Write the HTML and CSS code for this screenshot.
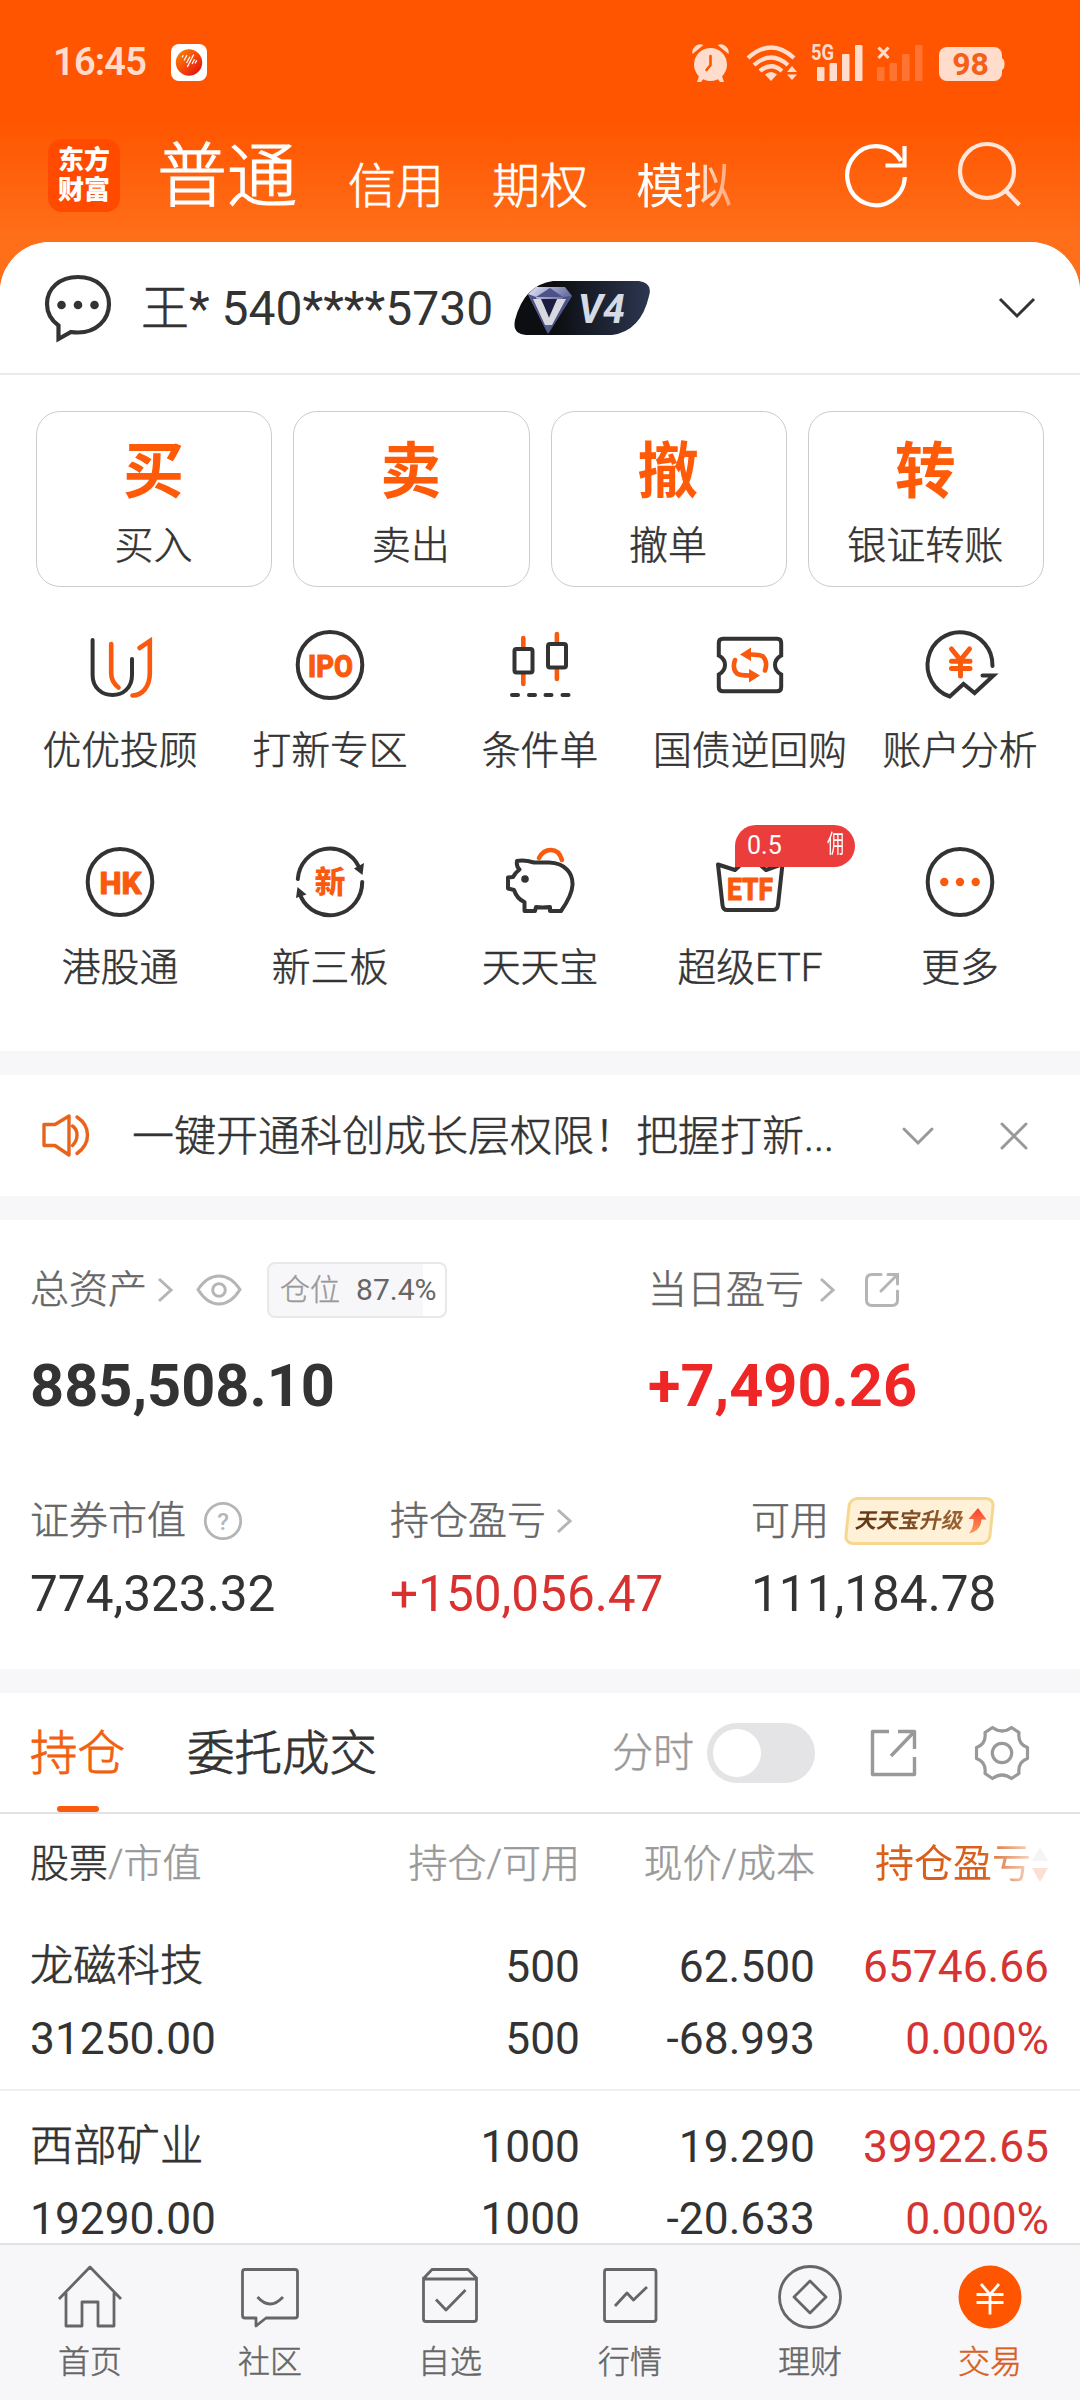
FILE: index.html
```html
<!DOCTYPE html>
<html lang="zh-CN">
<head>
<meta charset="utf-8">
<title>交易</title>
<link rel="stylesheet" href="styles.css">
</head>
<body>
<div class="app">
  <header class="top">
    <div class="status">
      <span class="clock">16:45</span>
      <svg class="notif" width="36" height="37" viewBox="0 0 36 37"><defs><linearGradient id="ng" x1="0" y1="0" x2="1" y2="1"><stop offset="0" stop-color="#ff8a00"/><stop offset=".6" stop-color="#f23c0c"/><stop offset="1" stop-color="#e00010"/></linearGradient></defs><rect width="36" height="37" rx="8" fill="#fff"/><circle cx="18" cy="18.500" r="13.200" fill="url(#ng)"/><g stroke="#fff" stroke-width="1.300" stroke-linecap="round"><path d="M11.300 13l.8-1.500M13.300 16l2.500-4.500M15.800 18.500l3-5.500M16.500 22.500l6-11.500M21.300 19.500l2-3.800M24.300 19l1.200-2.200"/></g></svg>
      <svg class="sys" width="316" height="58" viewBox="690 33 316 58">
        <g fill="#ffdccb">
          <circle cx="710.500" cy="63.500" r="16.500"/>
          <path d="M692.500 53a8 8 0 0 1 11-9zM728.500 53a8 8 0 0 0-11-9z"/>
          <path d="M699 75l-2 6h4l3-4zM722 75l2 6h-4l-3-4z"/>
          <path d="M771 80l-6-6.500q6-5 12 0z"/>
          <path d="M792 65l5 6h-10zM792 79l5-5.500h-10z"/>
          <rect x="817" y="66" width="7.500" height="14" rx="1"/><rect x="829.500" y="62" width="7.500" height="18" rx="1"/><rect x="842" y="53" width="7.500" height="27" rx="1"/><rect x="855" y="44" width="7.500" height="36" rx="1"/>
          <rect x="939" y="46" width="63" height="34" rx="8"/><path d="M1001 57q3.500 0 3.500 6t-3.500 6z"/>
        </g>
        <path d="M710.500 55v9l-4 5" stroke="#ff5500" stroke-width="2.600" fill="none" stroke-linecap="round"/>
        <g fill="none" stroke="#ffdccb" stroke-width="4.200"><path d="M748 57q23-21 46 0M754 64q17-15 34 0M760 70q11-9.500 22 0"/><path d="M878.500 46.500l10 10.500M888.500 46.500l-10 10.500" stroke-width="3.200"/></g>
        <g fill="#ff7433"><rect x="877" y="66" width="7.500" height="14" rx="1"/><rect x="889.500" y="62" width="7.500" height="18" rx="1"/><rect x="902" y="53" width="7.500" height="27" rx="1"/><rect x="915" y="44" width="7.500" height="36" rx="1"/></g>
        <text class="t5g" x="811" y="59" textLength="23" lengthAdjust="spacingAndGlyphs">5G</text>
        <text class="tbat" x="970.500" y="74" text-anchor="middle">98</text>
      </svg>
    </div>
    <div class="nav">
      <div class="logo"><span>东方</span><span>财富</span></div>
      <div class="modes"><b>普通</b><span>信用</span><span>期权</span><span class="fade">模拟</span></div>
      <svg class="refresh" width="66" height="68" viewBox="-33 -34 66 68" fill="none" stroke="#fff" stroke-width="4.200"><path d="M28.800 2A28.800 29.500 0 1 1 25 -14"/><path d="M28.500 -29V-9.500H9.500"/></svg>
      <svg class="search" width="68" height="68" viewBox="0 0 68 68" fill="none" stroke="#ffe6d8" stroke-width="4.200"><circle cx="31" cy="30" r="27"/><path d="M50 50l13.500 14"/></svg>
    </div>
  </header>

  <main>
    <section class="account">
      <svg width="70" height="70" viewBox="0 0 70 70"><path d="M35 4C53 4 66 15 66 31S53 59.500 35 59.500Q31 59.500 28 59L15.500 66V52.500C8 47 4 40 4 31C4 15 17 4 35 4z" fill="none" stroke="#333" stroke-width="4.200"/><g fill="#333"><circle cx="18.500" cy="32" r="4.300"/><circle cx="35" cy="32" r="4.300"/><circle cx="51.500" cy="32" r="4.300"/></g></svg>
      <span class="acct"><i>王</i>* 540****5730</span>
      <svg class="vip" width="136" height="54" viewBox="0 0 136 54"><defs><linearGradient id="vb"><stop offset=".3" stop-color="#0d0e11"/><stop offset="1" stop-color="#2c3650"/></linearGradient><linearGradient id="vd" x1="0" y1="0" x2="1" y2="1"><stop offset="0" stop-color="#e6e8fa"/><stop offset=".5" stop-color="#7277a8"/><stop offset="1" stop-color="#252852"/></linearGradient></defs><path d="M39 0H125Q139 2 135 15Q127 50 98 54H12Q-2 53 1 39Q10 4 39 0z" fill="url(#vb)"/><path d="M14 13L22 6H51L58 15L34 53z" fill="url(#vd)"/><path d="M14 13L34 53L22 16H49L34 53L58 15L49 16L36 7L22 16z" fill="#4d5388"/><path d="M19 18h9l7 19 8-19h9L38 44h-7z" fill="#d7d9de"/><path d="M27 18h16l-8 18z" fill="#1b1d40"/><text class="vtxt" x="64" y="41.500" textLength="47" lengthAdjust="spacingAndGlyphs">V4</text></svg>
      <svg class="down" width="38" height="22" viewBox="0 0 38 22"><path d="M2 2l17 17L36 2" fill="none" stroke="#333" stroke-width="3"/></svg>
    </section>

    <section class="actions">
      <div class="cards">
        <div class="card"><b>买</b><span>买入</span></div>
        <div class="card"><b>卖</b><span>卖出</span></div>
        <div class="card"><b>撤</b><span>撤单</span></div>
        <div class="card"><b>转</b><span>银证转账</span></div>
      </div>
      <div class="grid">
        <div class="item"><svg viewBox="0 0 72 72"><path class="k" d="M8.600 11V46C8.600 59 18 66 28.500 66S48 59 48 46V30"/><path class="o" d="M27.200 15V44Q27.200 53 34.500 58.500M55.500 19L65.800 12V44C65.800 58 58 66.500 48.500 66.500"/></svg><span>优优投顾</span></div>
        <div class="item"><svg viewBox="0 0 72 72"><ellipse class="k" cx="36" cy="36" rx="32.300" ry="33"/><text class="it" x="14" y="47.500" textLength="45" lengthAdjust="spacingAndGlyphs">IPO</text></svg><span>打新专区</span></div>
        <div class="item"><svg viewBox="0 0 72 72"><path class="o" d="M19.300 9V18M19.300 45V55M52.900 5V14M52.900 41V50"/><rect class="k" x="10.500" y="20" width="18" height="23.500" rx="2"/><rect class="k" x="44" y="15" width="18" height="23.500" rx="2"/><path class="k" d="M8 66h6M25 66h6M41.500 66h6M58.500 66h6"/></svg><span>条件单</span></div>
        <div class="item"><svg viewBox="0 0 72 72"><path class="k" d="M9 9.800H63Q67.200 9.800 67.200 14V26.500Q61 30 61 36T67.200 45.500V58Q67.200 62.300 63 62.300H9Q4.800 62.300 4.800 58V45.500Q11 42 11 36T4.800 26.500V14Q4.800 9.800 9 9.800z"/><path class="o" d="M21 31Q18 40 23 44.500Q26 46.500 35 46.500M51 41.500Q54 33 49 27.500Q46 25.500 37 25.500"/><path d="M26 25.500L37 18.500V32zM46 46.500L35 40V53.500z" fill="#f95a0d"/></svg><span>国债逆回购</span></div>
        <div class="item"><svg viewBox="0 0 72 72"><path class="k" d="M68.500 37A32.500 33 0 1 0 25.800 67.500L39.500 55L50.600 64L69.500 46.500H58.500"/><path class="o y" d="M27.500 20L36.500 31L45.500 20M27.500 32.300H46M27.500 39.500H46M36.500 32V47"/></svg><span>账户分析</span></div>
        <div class="item"><svg viewBox="0 0 72 72"><ellipse class="k" cx="36" cy="36" rx="32.300" ry="33"/><text class="it" x="15.500" y="47.500" textLength="42" lengthAdjust="spacingAndGlyphs">HK</text></svg><span>港股通</span></div>
        <div class="item"><svg viewBox="0 0 72 72"><path class="k" d="M3.800 33A32.300 33 0 0 1 65 21M68.200 36A32.300 33 0 0 1 7 51"/><path d="M70 17L68.500 29L60 22.500zM2 52L3.500 41L12.500 48.500z" fill="#333"/><text class="ix" x="36" y="47" text-anchor="middle">新</text></svg><span>新三板</span></div>
        <div class="item"><svg viewBox="0 0 72 72"><path class="o" d="M35 12Q39 4 47 4Q55 4 58 14"/><path class="k j" d="M13 15Q20 13.500 30 16.500H45C62 17 69 28 68.500 39C68 48 62 58 57 65H46V61Q38 62 32 61L31 65H20.500V56Q13 53 10 44L4 42.500V31.500L9 31Q11 27 15.500 23.500Q12 20 13 15z"/><circle cx="21" cy="33" r="3.800" fill="#333"/></svg><span>天天宝</span></div>
        <div class="item"><svg viewBox="0 0 72 72"><path class="k j" d="M4 18.500L21 24L36 10L52 24L68.500 18L64 59Q63.500 64 59 64H13Q9 64 8.500 59z"/><text class="it" x="13" y="54" textLength="46" lengthAdjust="spacingAndGlyphs">ETF</text></svg><div class="promo"><span>0.5</span><i>佣</i></div><span>超级ETF</span></div>
        <div class="item"><svg viewBox="0 0 72 72"><ellipse class="k" cx="36" cy="36" rx="32.300" ry="33"/><g fill="#f95a0d"><circle cx="20.300" cy="36" r="4.200"/><circle cx="36" cy="36" r="4.200"/><circle cx="51.700" cy="36" r="4.200"/></g></svg><span>更多</span></div>
      </div>
    </section>

    <section class="notice">
      <svg width="50" height="44" viewBox="0 0 50 44" fill="none" stroke="#e8641c" stroke-width="3.400" stroke-linejoin="round"><path d="M3 10.500H14L28 2V41L14 31.500H3z"/><path d="M31.500 12Q36 15 36 21T31.500 31.500M36 3Q46.500 10 46.500 21T36 39.500" stroke-linecap="round"/></svg>
      <p>一键开通科创成长层权限！把握打新...</p>
      <svg class="n1" width="34" height="20" viewBox="0 0 34 20"><path d="M3 3l14 14L31 3" fill="none" stroke="#999" stroke-width="3" stroke-linecap="round"/></svg>
      <svg class="n2" width="30" height="30" viewBox="0 0 30 30"><path d="M3 3l24 24M27 3L3 27" fill="none" stroke="#999" stroke-width="3" stroke-linecap="round"/></svg>
    </section>

    <section class="assets">
      <div class="row two">
        <div>
          <div class="lab"><span class="t">总资产</span><svg class="ch" width="16" height="26" viewBox="0 0 16 26"><path d="M2 2l12 11L2 24"/></svg>
          <svg class="eye" width="46" height="34" viewBox="0 0 46 34" fill="none" stroke="#b5b5b5" stroke-width="3"><path d="M2 16.500Q11 3 23 3T44 16.500Q35 31 23 31T2 16.500z"/><circle cx="23" cy="17" r="6.300"/></svg>
          <span class="pos"><i>仓位</i>87.4%</span></div>
          <div class="big">885,508.10</div>
        </div>
        <div>
          <div class="lab"><span class="t">当日盈亏</span><svg class="ch c2" width="16" height="26" viewBox="0 0 16 26"><path d="M2 2l12 11L2 24"/></svg>
          <svg class="sh" width="36" height="36" viewBox="0 0 36 36" fill="none" stroke="#b5b5b5" stroke-width="3" stroke-linecap="round"><path d="M17 2.500H8Q2.500 2.500 2.500 8V28Q2.500 33.500 8 33.500H28Q33.500 33.500 33.500 28V19M24 2.500H33.500V12M33 3L17 19"/></svg></div>
          <div class="big red">+7,490.26</div>
        </div>
      </div>
      <div class="row three">
        <div><div class="lab"><span class="t">证券市值</span><svg class="q" width="40" height="40" viewBox="0 0 40 40"><circle cx="20" cy="20" r="17.700" fill="none" stroke="#b5b5b5" stroke-width="2.800"/><text x="20" y="28.500" text-anchor="middle">?</text></svg></div><div class="num">774,323.32</div></div>
        <div><div class="lab"><span class="t">持仓盈亏</span><svg class="ch c3" width="16" height="26" viewBox="0 0 16 26"><path d="M2 2l12 11L2 24"/></svg></div><div class="num red2">+150,056.47</div></div>
        <div><div class="lab"><span class="t">可用</span><span class="up"><em>天天宝升级</em><svg width="20" height="26" viewBox="0 0 20 26"><defs><linearGradient id="ar" x1="0" y1="0" x2="0" y2="1"><stop offset="0" stop-color="#f9402c"/><stop offset="1" stop-color="#fb9a5c"/></linearGradient></defs><path d="M11 0L19.500 11.500H14.500Q14 23 2 25.500Q7 20 6.500 11H1.500z" fill="url(#ar)"/></svg></span></div><div class="num">111,184.78</div></div>
      </div>
    </section>

    <section class="holdings">
      <div class="tabs">
        <span class="on">持仓</span><span class="tab2">委托成交</span>
        <span class="fs">分时</span><span class="toggle"></span>
        <svg class="s2" width="48" height="48" viewBox="0 0 48 48" fill="none" stroke="#999" stroke-width="3.400" stroke-linejoin="round"><path d="M19 2.500H2.500V45.500H44.500V28M28 2.500H44.500V20M44 3L21 27"/></svg>
        <svg class="gear" width="56" height="56" viewBox="-28 -28 56 56" fill="none" stroke="#999" stroke-width="3.200" stroke-linejoin="round"><path d="M-9.500 -25.500Q0 -18.500 9.500 -25.500L17 -20.500Q15.500 -9 25.500 -5.500V5.500Q15.500 9 17 20.500L9.500 25.500Q0 18.500 -9.500 25.500L-17 20.500Q-15.500 9 -25.500 5.500V-5.500Q-15.500 -9 -17 -20.500z"/><circle r="9.700"/></svg>
      </div>
      <div class="tr head"><span><b>股票</b>/市值</span><span>持仓/可用</span><span>现价/成本</span><span class="sort">持仓盈亏<svg width="18" height="36" viewBox="0 0 18 36"><path d="M9 0L17 14H1z" fill="#f4f4f5"/><path d="M9 35L17 21H1z" fill="#fbe0d3"/></svg></span></div>
      <div class="tr stock"><div><span class="nm">龙磁科技</span><span>31250.00</span></div><div><span>500</span><span>500</span></div><div><span>62.500</span><span>-68.993</span></div><div class="red3"><span>65746.66</span><span>0.000%</span></div></div>
      <div class="tr stock last"><div><span class="nm">西部矿业</span><span>19290.00</span></div><div><span>1000</span><span>1000</span></div><div><span>19.290</span><span>-20.633</span></div><div class="red3"><span>39922.65</span><span>0.000%</span></div></div>
    </section>
  </main>

  <nav class="bar">
    <div><svg viewBox="0 0 68 68"><path d="M3 36L34 4L65 36M10 30V63H26V39H42V63H58V30"/></svg><span>首页</span></div>
    <div><svg viewBox="0 0 68 68"><path d="M9 6.500H59Q61.500 6.500 61.500 9V52.500Q61.500 55 59 55H30L20 63V55H9Q6.500 55 6.500 52.500V9Q6.500 6.500 9 6.500zM21.500 34Q34 48 47 34"/></svg><span>社区</span></div>
    <div><svg viewBox="0 0 68 68"><path d="M8 15L16 6.500H52L60.500 15V56Q60.500 58.500 58 58.500H10Q7.500 58.500 7.500 56V15zM8 16H60M20 36.500L30 47L49.500 27"/></svg><span>自选</span></div>
    <div><svg viewBox="0 0 68 68"><path d="M10.500 6.500H57.500Q60 6.500 60 9V56Q60 58.500 57.500 58.500H10.500Q8.500 58.500 8.500 56V9Q8.500 6.500 10.500 6.500zM19 43L31 30L37.500 37L51 24"/></svg><span>行情</span></div>
    <div><svg viewBox="0 0 68 68"><circle cx="34" cy="34" r="30.500"/><path d="M34 18L50 34L34 50L18 34z"/></svg><span>理财</span></div>
    <div class="cur"><svg viewBox="0 0 68 68"><circle cx="34" cy="34" r="31.500" fill="#ff5500" stroke="none"/><path d="M25 21L34 31.500L43 21M20.500 31.500H47.500M20.500 39.500H47.500M34 31V51.500" stroke="#fff"/></svg><span>交易</span></div>
  </nav>
</div>
</body>
</html>
```
FILE: styles.css
```css
* { box-sizing: border-box; margin: 0; padding: 0; }
body { width: 1080px; font-family: Roboto, "Noto Sans CJK SC", sans-serif; color: #333; font-weight: 400; }
i, em { font-style: normal; }
svg { display: block; flex: none; }
.app { width: 1080px; height: 2400px; display: flex; flex-direction: column; overflow: hidden; background: #f7f7fa; }
.top { flex: none; height: 292px; background: linear-gradient(#ff5500 0, #ff5500 120px, #ff6f1a 240px, #ff6f1a); }
.status { height: 125px; display: flex; align-items: center; padding: 0 74px 0 53px; }
.clock { width: 118px; font-size: 38px; letter-spacing: -.8px; font-weight: 600; color: #ffdccb; line-height: 40px; padding-bottom: 1px; }
.sys { margin-left: auto; }
.t5g { font: 700 22px Roboto, sans-serif; fill: #ffdccb; }
.tbat { font: 700 32px Roboto, sans-serif; fill: #f2601a; }
.nav { height: 100px; display: flex; align-items: center; padding: 0 56px 0 48px; }
.logo { width: 72px; height: 73px; border-radius: 14px; background: #ff4a00; color: #fff; display: flex; flex-direction: column; justify-content: center; font-size: 26px; font-weight: 800; line-height: 30px; align-items: center; }
.modes { display: flex; align-items: flex-end; margin: 4px 0 0 37px; color: #fff; font-size: 48px; line-height: 64px; font-weight: 300; gap: 48px; height: 84px; white-space: nowrap; -webkit-text-stroke: .6px; }
.modes b { font-size: 70px; font-weight: 300; line-height: 84px; width: 143px; -webkit-text-stroke: 1.200px; }
.modes span { width: 96px; }
.modes .fade { background: linear-gradient(90deg, #fff 55%, rgba(255,255,255,.4)); -webkit-background-clip: text; background-clip: text; color: transparent; -webkit-text-stroke: 0; font-weight: 400; }
.refresh { margin-left: auto; margin-right: 47px; }

main { flex: 1; min-height: 0; overflow: hidden; margin-top: -50px; border-radius: 50px 50px 0 0; background: #f7f7fa; display: flex; flex-direction: column; gap: 24px; }
main > section { background: #fff; flex: none; }
.account { height: 133px; border-bottom: 2px solid #ebebeb; display: flex; align-items: center; padding: 0 44px 0 43px; margin-bottom: -24px; }
.acct { font-size: 48px; margin-left: 28px; width: 373px; white-space: nowrap; line-height: 60px; padding-top: 3px; }
.acct i { font-weight: 300; -webkit-text-stroke: .6px; }
.vtxt { font: italic 700 41px Roboto, sans-serif; fill: #d5dae4; }
.down { margin-left: auto; }

.actions { height: 676px; padding-top: 36px; }
.cards { display: grid; grid-template-columns: repeat(4, 1fr); gap: 21px; padding: 0 36px; }
.card { height: 176px; border: 1.500px solid #ccc; border-radius: 24px; display: flex; flex-direction: column; align-items: center; padding-right: 1px; }
.card b { margin-top: 22px; height: 76px; font-size: 61px; line-height: 76px; color: #ff5a08; font-weight: 700; }
.card span { font-size: 39px; line-height: 54px; margin-top: 9px; font-weight: 300; -webkit-text-stroke: .5px; }
.grid { margin: 42px 15px 0; display: grid; grid-template-columns: repeat(5, 1fr); row-gap: 68px; }
.item { position: relative; display: flex; flex-direction: column; align-items: center; }
.item > svg { width: 72px; height: 72px; overflow: visible; }
.item > span { font-size: 38.800px; line-height: 54px; margin-top: 23px; font-weight: 300; white-space: nowrap; -webkit-text-stroke: .5px; }
.k, .o { fill: none; stroke: #333; stroke-width: 4; stroke-linecap: round; }
.o { stroke: #f95a0d; stroke-width: 4.600; }
.y { stroke-width: 5; }
.j { stroke-linejoin: round; }
.it { font: 800 32px Roboto, sans-serif; fill: #f95a0d; stroke: #f95a0d; stroke-width: 1; stroke-linejoin: round; }
.ix { font: 900 31px "Noto Sans CJK SC", sans-serif; fill: #f95a0d; }
.promo { position: absolute; left: 90px; top: -21px; width: 120px; height: 42px; background: #eb3d3c; border-radius: 21px 21px 21px 0; color: #fff; display: flex; align-items: center; padding: 0 7px 2px 12px; font-size: 25px; justify-content: space-between; }
.promo i { transform: scaleX(.68); font-weight: 400; line-height: 34px; }

.notice { height: 121px; display: flex; align-items: center; padding: 0 51px 0 41px; }
.notice p { font-size: 42px; font-weight: 300; width: 720px; margin-left: 41px; line-height: 60px; white-space: nowrap; -webkit-text-stroke: .5px; padding-top: 2px; }
.n1 { margin-left: 49px; }
.n2 { margin-left: auto; }

.assets { height: 449px; padding: 42px 0 0 30px; }
.row { display: grid; }
.two { grid-template-columns: 618px 1fr; }
.three { grid-template-columns: 360px 361px 1fr; margin-top: 71px; }
.lab { height: 56px; display: flex; align-items: center; font-size: 39px; color: #666; font-weight: 300; white-space: nowrap; }
.t { line-height: 56px; -webkit-text-stroke: .5px; }
.ch { fill: none; stroke: #b5b5b5; stroke-width: 3; margin-left: 10px; }
.c2 { margin-left: 15px; }
.c3 { margin-left: 10px; }
.eye { margin-left: 23px; }
.pos { margin-left: 25px; width: 180px; height: 56px; border: 2px solid #e8e8ea; border-radius: 8px; background: linear-gradient(90deg, #f7f7fa 87.400%, #fff 87.400%); display: flex; align-items: center; padding-left: 11px; font-size: 30px; font-weight: 400; line-height: 50px; }
.pos i { color: #999; width: 76px; font-weight: 300; -webkit-text-stroke: .4px; }
.sh { margin-left: 29px; }
.big { font-size: 59.500px; font-weight: 700; line-height: 72px; margin-top: 32px; }
.red { color: #ee2626; }
.q { margin-left: 17px; }
.q text { font: 500 24px Roboto, sans-serif; fill: #b5b5b5; }
.num { font-size: 49.500px; line-height: 60px; margin-top: 15px; }
.red2 { color: #d93030; }
.up { margin-left: 17px; width: 147px; height: 48px; position: relative; display: flex; align-items: center; justify-content: center; gap: 4px; padding-left: 4px; }
.up::before { content: ""; position: absolute; inset: 0; border: 3px solid #f5d78e; border-radius: 9px; background: #fef1d8; transform: skewX(-6deg); }
.up em { position: relative; font-size: 21.500px; line-height: 40px; font-weight: 700; transform: skewX(-12deg); background: linear-gradient(90deg, #5e3512, #a06434); -webkit-background-clip: text; background-clip: text; color: transparent; }
.up svg { position: relative; }

.tabs { height: 121px; border-bottom: 2px solid #e2e2e4; display: flex; align-items: center; padding: 0 50px 0 30px; font-size: 47.500px; font-weight: 300; white-space: nowrap; }
.on { color: #f2600f; position: relative; line-height: 117px; padding-top: 3px; -webkit-text-stroke: .8px; }
.on::after { content: ""; position: absolute; left: 27px; bottom: 1px; width: 42px; height: 6px; border-radius: 3px; background: #f95a0d; }
.tab2 { margin-left: 62px; line-height: 117px; padding-top: 3px; -webkit-text-stroke: .8px; }
.fs { margin-left: auto; font-size: 41px; color: #999; line-height: 60px; -webkit-text-stroke: .5px; }
.toggle { width: 108px; height: 60px; border-radius: 30px; background: #e4e4e6; margin-left: 13px; padding: 6px; }
.toggle::before { content: ""; display: block; width: 48px; height: 48px; border-radius: 50%; background: #fff; }
.s2 { margin-left: 55px; }
.gear { margin-left: 56px; }
.tr { display: grid; grid-template-columns: 301px 249px 235px 234px; padding: 0 30px; text-align: right; }
.tr > :first-child { text-align: left; }
.head { height: 101px; line-height: 101px; font-size: 39px; font-weight: 300; color: #999; -webkit-text-stroke: .5px; }
.head b { font-weight: 300; color: #333; }
.sort { display: flex; justify-content: flex-end; align-items: center; font-weight: 400; -webkit-text-stroke: 0; color: transparent; background: linear-gradient(90deg, #d9601c 72%, #f7dccb 93%); -webkit-background-clip: text; background-clip: text; white-space: nowrap; }
.stock { height: 176px; padding-top: 16px; border-bottom: 2px solid #efefef; font-size: 44.300px; line-height: 72px; }
.stock > div { display: flex; flex-direction: column; }
.stock .nm { font-size: 43.300px; font-weight: 300; -webkit-text-stroke: .7px; }
.last { margin-top: 4px; border: 0; }
.last span + span { line-height: 48px; margin-top: 12px; }
.red3 { color: #d63333; }

.bar { flex: none; height: 157px; border-top: 2px solid #e2e2e4; background: #f7f7fa; display: grid; grid-template-columns: repeat(6, 1fr); }
.bar div { display: flex; flex-direction: column; align-items: center; padding-top: 18px; font-size: 32px; line-height: 44px; color: #666; font-weight: 300; }
.bar svg { width: 68px; height: 68px; fill: none; stroke: #666; stroke-width: 2.800; stroke-linejoin: round; }
.bar span { margin-top: 9px; -webkit-text-stroke: .5px; }
.bar .cur { color: #d9601c; }
```
